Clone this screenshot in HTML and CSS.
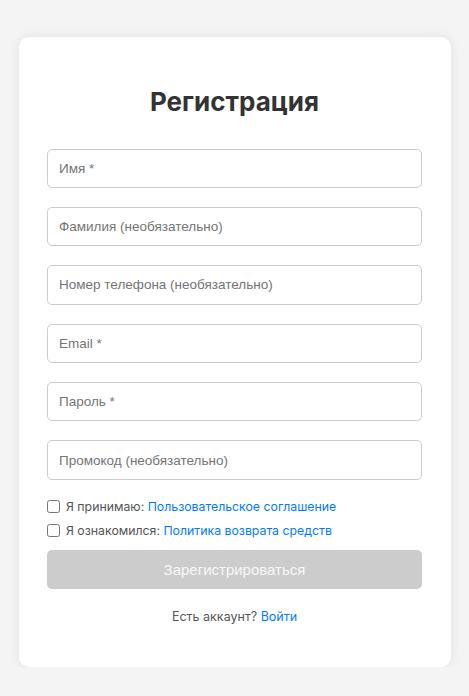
FILE: index.html
```html
<!DOCTYPE html>
<html lang="ru">
<head>
<meta charset="utf-8">
<title>Регистрация</title>
<link rel="stylesheet" href="styles.css">
</head>
<body>
<div class="card">
  <h1 class="title">Регистрация</h1>
  <form class="form">
    <input class="field" type="text" placeholder="Имя *">
    <input class="field" type="text" placeholder="Фамилия (необязательно)">
    <input class="field" type="tel" placeholder="Номер телефона (необязательно)">
    <input class="field" type="email" placeholder="Email *">
    <input class="field" type="password" placeholder="Пароль *">
    <input class="field" type="text" placeholder="Промокод (необязательно)">
    <label class="check"><input type="checkbox" class="box"><span>Я принимаю: <a class="link" href="#">Пользовательское соглашение</a></span></label>
    <label class="check"><input type="checkbox" class="box"><span>Я ознакомился: <a class="link" href="#">Политика возврата средств</a></span></label>
    <button type="button" class="submit" disabled>Зарегистрироваться</button>
  </form>
  <p class="footer">Есть аккаунт? <a class="link" href="#">Войти</a></p>
</div>
</body>
</html>
```
FILE: styles.css
```css
* { box-sizing: border-box; }
html, body { margin: 0; padding: 0; }
body {
  background: #f4f4f4;
  padding-top: 36.5px;
  font-family: "Inter", "Liberation Sans", sans-serif;
}
.card {
  width: 432px;
  margin: 0 auto;
  background: #fff;
  border-radius: 10px;
  box-shadow: 0 0 12px rgba(0,0,0,0.08);
  padding: 46px 28.5px 41px;
}
.title {
  margin: 0 0 28px;
  text-align: center;
  font-family: "Inter", sans-serif;
  font-weight: 700;
  font-size: 26px;
  line-height: 38px;
  letter-spacing: 0;
  color: #333;
}
.form { display: flex; flex-direction: column; }
.field {
  display: block;
  width: 100%;
  height: 39.4px;
  margin: 0 0 19px;
  padding: 0 11px;
  border: 1px solid #ccc;
  border-radius: 5px;
  font-family: "Liberation Sans", Arial, sans-serif;
  font-size: 13.5px;
  color: #333;
  outline: none;
}
.field::placeholder { color: #757575; }
.field:last-of-type { margin-bottom: 15px; }
.check {
  display: flex;
  align-items: center;
  gap: 6px;
  height: 24px;
  font-size: 12.3px;
  color: #555;
}
.box { width: 13px; height: 13px; margin: 0; }
.link { color: #007bff; text-decoration: none; }
.submit {
  margin-top: 7px;
  height: 38.7px;
  border: none;
  border-radius: 5px;
  background: #ccc;
  color: #f7f7f7;
  font-family: "Liberation Sans", Arial, sans-serif;
  font-size: 15px;
}
.footer {
  margin: 19px 0 0;
  text-align: center;
  font-size: 12.5px;
  line-height: 18px;
  color: #555;
}
```
